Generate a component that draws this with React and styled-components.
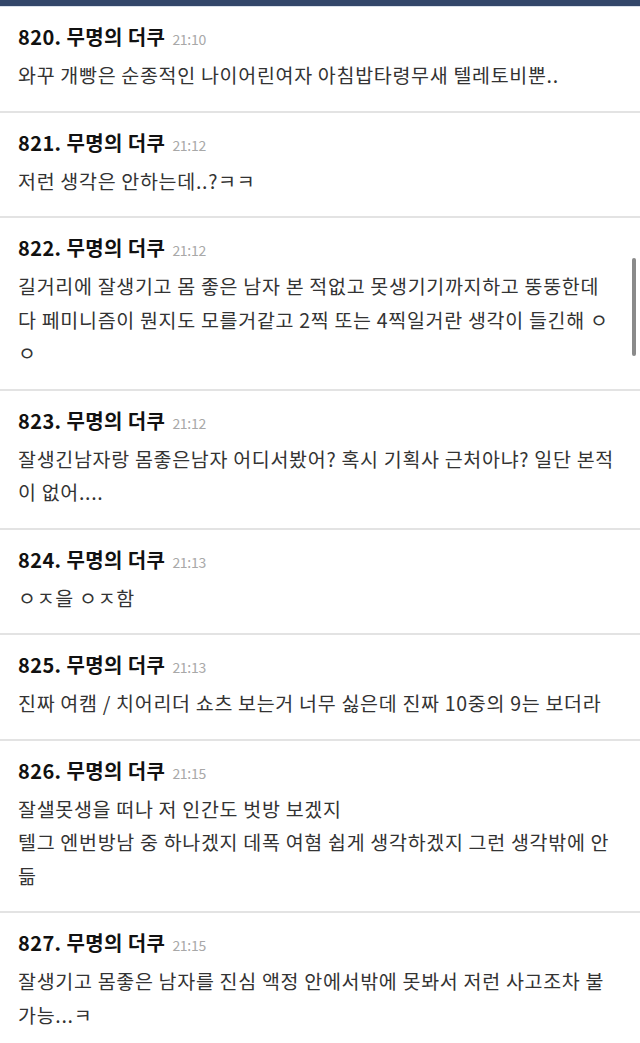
import React from "react";
import styled, { createGlobalStyle } from "styled-components";

const Global = createGlobalStyle`
  html, body { margin: 0; padding: 0; background: #fff; }
  body { font-family: "Noto Sans CJK KR", "Noto Sans", sans-serif; }
`;

const Page = styled.div`
  position: relative;
  width: 640px;
  height: 1043px;
  overflow: hidden;
  background: #fff;
`;

const TopBar = styled.div`
  height: 6px;
  background: #33476a;
  border-bottom: 1px solid #d9e0ea;
`;

const List = styled.div`
  display: flex;
  flex-direction: column;
`;

const Post = styled.article`
  display: flex;
  flex-direction: column;
  gap: 8px;
  padding: 17px 24px 19px 18px;
  border-bottom: 2px solid #e3e3e3;
`;

const Header = styled.div`
  display: flex;
  align-items: baseline;
  height: 26px;
  line-height: 26px;
`;

const Name = styled.span`
  font-size: 20px;
  font-weight: 700;
  color: #111;
  letter-spacing: 0.4px;
`;

const Time = styled.span`
  margin-left: 7px;
  font-size: 14px;
  color: #a8a8a8;
  letter-spacing: -0.3px;
`;

const Body = styled.div`
  font-size: 19.5px;
  line-height: 33.5px;
  color: #333;
  letter-spacing: 0.7px;
  word-break: break-all;
`;

const Scrollbar = styled.div`
  position: absolute;
  right: 4px;
  top: 258px;
  width: 4px;
  height: 98px;
  border-radius: 2px;
  background: #8a8a8a;
`;

const posts = [
  { n: 820, t: "21:10", lines: ["와꾸 개빵은 순종적인 나이어린여자 아침밥타령무새 텔레토비뿐.."] },
  { n: 821, t: "21:12", lines: ["저런 생각은 안하는데..?ㅋㅋ"] },
  { n: 822, t: "21:12", lines: ["길거리에 잘생기고 몸 좋은 남자 본 적없고 못생기기까지하고 뚱뚱한데다 페미니즘이 뭔지도 모를거같고 2찍 또는 4찍일거란 생각이 들긴해 ㅇㅇ"] },
  { n: 823, t: "21:12", lines: ["잘생긴남자랑 몸좋은남자 어디서봤어? 혹시 기획사 근처아냐? 일단 본적이 없어...."] },
  { n: 824, t: "21:13", lines: ["ㅇㅈ을 ㅇㅈ함"] },
  { n: 825, t: "21:13", lines: ["진짜 여캠 / 치어리더 쇼츠 보는거 너무 싫은데 진짜 10중의 9는 보더라"] },
  { n: 826, t: "21:15", lines: ["잘샐못생을 떠나 저 인간도 벗방 보겠지", "텔그 엔번방남 중 하나겠지 데폭 여혐 쉽게 생각하겠지 그런 생각밖에 안듦"] },
  { n: 827, t: "21:15", lines: ["잘생기고 몸좋은 남자를 진심 액정 안에서밖에 못봐서 저런 사고조차 불가능...ㅋ"] },
];

export default function App() {
  return (
    <Page>
      <Global />
      <TopBar />
      <List>
        {posts.map((p) => (
          <Post key={p.n}>
            <Header>
              <Name>{p.n}. 무명의 더쿠</Name>
              <Time>{p.t}</Time>
            </Header>
            <Body>
              {p.lines.map((l, i) => (
                <div key={i}>{l}</div>
              ))}
            </Body>
          </Post>
        ))}
      </List>
      <Scrollbar />
    </Page>
  );
}
